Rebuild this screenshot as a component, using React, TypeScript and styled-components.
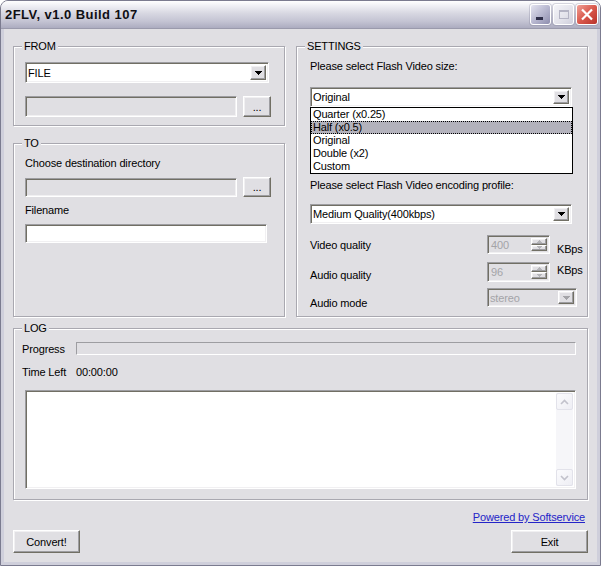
import React from "react";
import styled, { createGlobalStyle } from "styled-components";

const GlobalStyle = createGlobalStyle`
  html, body {
    margin: 0;
    padding: 0;
    background: #ffffff;
  }
  body {
    font-family: "Liberation Sans", Arial, sans-serif;
    font-size: 11px;
    letter-spacing: -0.15px;
    color: #000;
  }
  * {
    box-sizing: border-box;
  }
`;

const FACE = "#e0dfe3";
const SHADOW = "#9d9da1";
const DARK = "#716f64";
const LIGHT = "#f1f0f2";

const Tri = ({ color = "#000" }: { color?: string }) => (
  <svg width="7" height="4" viewBox="0 0 7 4" shapeRendering="crispEdges">
    <rect x="0" y="0" width="7" height="1" fill={color} />
    <rect x="1" y="1" width="5" height="1" fill={color} />
    <rect x="2" y="2" width="3" height="1" fill={color} />
    <rect x="3" y="3" width="1" height="1" fill={color} />
  </svg>
);

const Chevron = ({ up }: { up?: boolean }) => (
  <svg width="9" height="6" viewBox="0 0 9 6">
    <path d={up ? "M1 5 L4.5 1.5 L8 5" : "M1 1 L4.5 4.5 L8 1"} stroke="#c2c2cc" strokeWidth="1.6" fill="none" />
  </svg>
);

type Combo = {
  text: string;
  width: number;
  height: number;
  disabled?: boolean;
  children?: React.ReactNode;
};

const ComboBox: React.FC<Combo> = ({ text, width, height, disabled, children }) => (
  <ComboFrame $width={width} $height={height} $disabled={disabled}>
    <ComboText $disabled={disabled}>{text}</ComboText>
    <DropButton>
      <Tri color={disabled ? "#a4a4a8" : "#000"} />
    </DropButton>
    {children}
  </ComboFrame>
);

const Spin: React.FC<{ value: string; height: number }> = ({ value, height }) => (
  <SpinBox $height={height}>
    <SpinText>{value}</SpinText>
    <SpinButtons>
      <SpinButton>
        <Tri color="#b4b4b8" />
      </SpinButton>
      <SpinButton $down>
        <Tri color="#b4b4b8" />
      </SpinButton>
    </SpinButtons>
  </SpinBox>
);

const sizeItems = ["Quarter (x0.25)", "Half (x0.5)", "Original", "Double (x2)", "Custom"];

export default function App() {
  return (
    <>
      <GlobalStyle />
      <Window>
        <TitleBar>
          <TitleText>2FLV, v1.0 Build 107</TitleText>
          <CaptionButtons>
            <CaptionButton $kind="min">
              <svg width="19" height="19" viewBox="0 0 19 19">
                <rect x="5" y="12" width="7" height="3" fill="#2f2f4a" />
              </svg>
            </CaptionButton>
            <CaptionButton $kind="max">
              <svg width="19" height="19" viewBox="0 0 19 19">
                <rect x="5.5" y="5.5" width="9" height="8" fill="none" stroke="#b4b4c4" />
                <rect x="5" y="5" width="10" height="2" fill="#b4b4c4" />
              </svg>
            </CaptionButton>
            <CaptionButton $kind="close">
              <svg width="20" height="19" viewBox="0 0 20 19">
                <path d="M5 4.5 L15 14.5 M15 4.5 L5 14.5" stroke="#fff" strokeWidth="2.2" />
              </svg>
            </CaptionButton>
          </CaptionButtons>
        </TitleBar>

        <Body>
          <TopGrid>
            <LeftColumn>
              <GroupBox $pad="9px 12px 8px 11px">
                <Legend>FROM</Legend>
                <ComboBox text="FILE" width={244} height={21} />
                <FieldRow $mt={13}>
                  <Edit $width={212} $height={21} $disabled />
                  <PushButton $width={28} $height={21}>...</PushButton>
                </FieldRow>
              </GroupBox>

              <GroupBox $pad="7px 12px 0 11px" $grow>
                <Legend>TO</Legend>
                <Label>Choose destination directory</Label>
                <FieldRow $mt={7}>
                  <Edit $width={212} $height={19} $disabled />
                  <PushButton $width={28} $height={20}>...</PushButton>
                </FieldRow>
                <Label $mt={7}>Filename</Label>
                <Edit $width={242} $height={19} $mt={7} />
              </GroupBox>
            </LeftColumn>

            <GroupBox $pad="7px 12px 0 13px">
              <Legend $shift={-5}>SETTINGS</Legend>
              <Label>Please select Flash Video size:</Label>
              <FieldRow $mt={14}>
                <ComboBox text="Original" width={262} height={20}>
                  <DropList>
                    {sizeItems.map((item) => (
                      <DropItem key={item} $selected={item === "Half (x0.5)"}>
                        {item}
                      </DropItem>
                    ))}
                  </DropList>
                </ComboBox>
              </FieldRow>
              <Label $mt={72}>Please select Flash Video encoding profile:</Label>
              <FieldRow $mt={12}>
                <ComboBox text="Medium Quality(400kbps)" width={262} height={20} />
              </FieldRow>

              <SettingRow $mt={11} $h={19}>
                <RowLabel $offset={4}>Video quality</RowLabel>
                <Spin value="400" height={19} />
                <Unit $offset={8}>KBps</Unit>
              </SettingRow>
              <SettingRow $mt={8} $h={20}>
                <RowLabel $offset={7}>Audio quality</RowLabel>
                <Spin value="96" height={20} />
                <Unit $offset={2}>KBps</Unit>
              </SettingRow>
              <SettingRow $mt={6} $h={19}>
                <RowLabel $offset={9}>Audio mode</RowLabel>
                <ComboBox text="stereo" width={90} height={19} disabled />
              </SettingRow>
            </GroupBox>
          </TopGrid>

          <GroupBox $pad="7px 11px 10px 11px" $mt={5}>
            <Legend>LOG</Legend>
            <LogRow>
              <LogLabel>Progress</LogLabel>
              <ProgressBar />
            </LogRow>
            <LogRow $mt={10}>
              <LogLabel>Time Left</LogLabel>
              <span>00:00:00</span>
            </LogRow>
            <Memo>
              <ScrollBar>
                <ScrollButton>
                  <Chevron up />
                </ScrollButton>
                <ScrollTrack />
                <ScrollButton>
                  <Chevron />
                </ScrollButton>
              </ScrollBar>
            </Memo>
          </GroupBox>

          <Footer>
            <Link href="#">Powered by Softservice</Link>
          </Footer>
          <ButtonRow>
            <PushButton $width={67} $height={23}>
              Convert!
            </PushButton>
            <PushButton $width={77} $height={23}>
              Exit
            </PushButton>
          </ButtonRow>
        </Body>
      </Window>
    </>
  );
}

const Window = styled.div`
  width: 601px;
  height: 566px;
  display: flex;
  flex-direction: column;
  border: 1px solid #7b7b8f;
  border-radius: 8px 8px 0 0;
  overflow: hidden;
  background: ${FACE};
`;

const TitleBar = styled.div`
  height: 28px;
  flex: none;
  display: flex;
  align-items: center;
  padding: 0 2px 1px 4px;
  background: linear-gradient(to bottom, #ffffff 0%, #efeff4 18%, #d8d8e2 45%, #c4c4d3 75%, #acacc0 100%);
  border-bottom: 1px solid #9a9aac;
`;

const TitleText = styled.div`
  font-family: "Liberation Sans", Arial, sans-serif;
  font-weight: bold;
  font-size: 13px;
  color: #0f0f14;
  letter-spacing: 0.45px;
`;

const CaptionButtons = styled.div`
  margin-left: auto;
  display: flex;
  gap: 2px;
`;

const CaptionButton = styled.div<{ $kind: "min" | "max" | "close" }>`
  width: ${(p) => (p.$kind === "close" ? 22 : 21)}px;
  height: 21px;
  border-radius: 3px;
  border: 1px solid #ffffff;
  display: flex;
  align-items: center;
  justify-content: center;
  box-shadow: 0 0 0 1px rgba(110, 110, 140, 0.25);
  background: ${(p) =>
    p.$kind === "min"
      ? "linear-gradient(135deg, #e4e4f0 0%, #b8b8d0 50%, #8e8eae 100%)"
      : p.$kind === "max"
      ? "linear-gradient(135deg, #f4f4f8 0%, #e2e2ea 60%, #cfcfdc 100%)"
      : "linear-gradient(135deg, #f0a096 0%, #d9584c 50%, #b8322a 100%)"};
`;

const Body = styled.div`
  flex: 1;
  display: flex;
  flex-direction: column;
  padding: 11px 9px 9px 9px;
  border-style: solid;
  border-width: 0 3px 3px 3px;
  border-color: #cfcfdb;
`;

const TopGrid = styled.div`
  display: grid;
  grid-template-columns: 272px 292px;
  column-gap: 11px;
  height: 277px;
`;

const LeftColumn = styled.div`
  display: flex;
  flex-direction: column;
  gap: 11px;
`;

const GroupBox = styled.fieldset<{ $pad: string; $grow?: boolean; $mt?: number }>`
  margin: ${(p) => p.$mt ?? 0}px 0 0 0;
  padding: ${(p) => p.$pad};
  min-width: 0;
  border: 1px solid #a9a8b0;
  box-shadow: inset 1px 1px 0 #ffffff, 1px 1px 0 #ffffff;
  flex: ${(p) => (p.$grow ? 1 : "none")};
  display: flex;
  flex-direction: column;
  align-items: flex-start;
`;

const Legend = styled.legend<{ $shift?: number }>`
  padding: 0 2px;
  margin-left: ${(p) => p.$shift ?? -3}px;
  line-height: 13px;
  font-size: 11px;
  background: ${FACE};
  color: #000;
`;

const Label = styled.div<{ $mt?: number }>`
  margin-top: ${(p) => p.$mt ?? 0}px;
  line-height: 13px;
  white-space: nowrap;
`;

const FieldRow = styled.div<{ $mt?: number }>`
  margin-top: ${(p) => p.$mt ?? 0}px;
  display: flex;
  align-items: center;
  gap: 6px;
`;

const sunken = `
  border: 1px solid;
  border-color: ${SHADOW} #ffffff #ffffff ${SHADOW};
  box-shadow: inset 1px 1px 0 ${DARK}, inset -1px -1px 0 ${LIGHT};
`;

const raised = `
  border: 1px solid;
  border-color: #ffffff ${DARK} ${DARK} #ffffff;
  box-shadow: inset -1px -1px 0 ${SHADOW}, inset 1px 1px 0 ${LIGHT};
  background: ${FACE};
`;

const Edit = styled.div<{ $width: number; $height: number; $disabled?: boolean; $mt?: number }>`
  ${sunken}
  width: ${(p) => p.$width}px;
  height: ${(p) => p.$height}px;
  margin-top: ${(p) => p.$mt ?? 0}px;
  background: ${(p) => (p.$disabled ? FACE : "#ffffff")};
`;

const PushButton = styled.div<{ $width: number; $height: number }>`
  ${raised}
  width: ${(p) => p.$width}px;
  height: ${(p) => p.$height}px;
  display: flex;
  align-items: center;
  justify-content: center;
  font-size: 11px;
  color: #000;
`;

const ComboFrame = styled.div<{ $width: number; $height: number; $disabled?: boolean }>`
  ${sunken}
  position: relative;
  width: ${(p) => p.$width}px;
  height: ${(p) => p.$height}px;
  display: flex;
  align-items: stretch;
  padding: 2px;
  background: ${(p) => (p.$disabled ? FACE : "#ffffff")};
`;

const ComboText = styled.div<{ $disabled?: boolean }>`
  flex: 1;
  display: flex;
  align-items: center;
  white-space: nowrap;
  color: ${(p) => (p.$disabled ? "#a4a4a8" : "#000")};
`;

const DropButton = styled.div`
  ${raised}
  width: 16px;
  display: flex;
  align-items: center;
  justify-content: center;
`;

const DropList = styled.div`
  position: absolute;
  top: calc(100% + 1px);
  left: -1px;
  width: 263px;
  border: 1px solid #000;
  background: #ffffff;
  z-index: 2;
`;

const DropItem = styled.div<{ $selected?: boolean }>`
  height: 13px;
  line-height: 13px;
  padding-left: 2px;
  white-space: nowrap;
  background: ${(p) => (p.$selected ? "#b3b2bc" : "transparent")};
  outline: ${(p) => (p.$selected ? "1px dotted #000" : "none")};
  outline-offset: -1px;
`;

const SettingRow = styled.div<{ $mt: number; $h: number }>`
  margin-top: ${(p) => p.$mt}px;
  height: ${(p) => p.$h}px;
  display: flex;
  align-items: flex-start;
`;

const RowLabel = styled.div<{ $offset: number }>`
  width: 177px;
  margin-top: ${(p) => p.$offset}px;
  line-height: 13px;
`;

const Unit = styled.div<{ $offset: number }>`
  margin: ${(p) => p.$offset}px 0 0 7px;
  line-height: 13px;
`;

const SpinBox = styled.div<{ $height: number }>`
  ${sunken}
  width: 63px;
  height: ${(p) => p.$height}px;
  display: flex;
  padding: 2px;
  background: ${FACE};
`;

const SpinText = styled.div`
  flex: 1;
  display: flex;
  align-items: center;
  padding-left: 1px;
  color: #a4a4a8;
`;

const SpinButtons = styled.div`
  width: 16px;
  display: flex;
  flex-direction: column;
`;

const SpinButton = styled.div<{ $down?: boolean }>`
  ${raised}
  flex: 1;
  display: flex;
  align-items: center;
  justify-content: center;
  svg {
    transform: ${(p) => (p.$down ? "none" : "rotate(180deg)")};
    width: 5px;
    height: 3px;
  }
`;

const LogRow = styled.div<{ $mt?: number }>`
  margin: ${(p) => p.$mt ?? 0}px 0 0 -3px;
  width: calc(100% + 3px);
  display: flex;
  align-items: center;
  height: 13px;
`;

const LogLabel = styled.div`
  width: 54px;
  flex: none;
  white-space: nowrap;
`;

const ProgressBar = styled.div`
  flex: 1;
  height: 13px;
  border: 1px solid;
  border-color: ${SHADOW} #ffffff #ffffff ${SHADOW};
`;

const Memo = styled.div`
  ${sunken}
  margin-top: 12px;
  width: 100%;
  height: 99px;
  background: #ffffff;
  padding: 2px;
  display: flex;
  justify-content: flex-end;
`;

const ScrollBar = styled.div`
  width: 17px;
  display: flex;
  flex-direction: column;
  background: #f6f6f9;
`;

const ScrollButton = styled.div`
  height: 17px;
  border: 1px solid #e2e2ea;
  border-radius: 2px;
  background: linear-gradient(135deg, #fbfbfd, #eeeef4);
  display: flex;
  align-items: center;
  justify-content: center;
`;

const ScrollTrack = styled.div`
  flex: 1;
`;

const Footer = styled.div`
  margin-top: 11px;
  display: flex;
  justify-content: flex-end;
  padding-right: 3px;
  line-height: 13px;
`;

const Link = styled.a`
  color: #2424c8;
  text-decoration: underline;
  font-size: 11px;
`;

const ButtonRow = styled.div`
  margin-top: 6px;
  display: flex;
  justify-content: space-between;
`;
